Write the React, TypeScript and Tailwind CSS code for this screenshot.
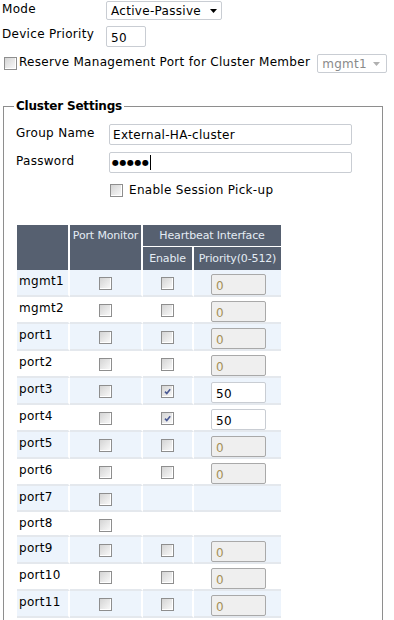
import React from 'react';

type Row = { name: string; hb: boolean; on?: boolean; val?: string; h?: string };

const rows: Row[] = [
  { name: 'mgmt1', hb: true, val: '0' },
  { name: 'mgmt2', hb: true, val: '0' },
  { name: 'port1', hb: true, val: '0' },
  { name: 'port2', hb: true, val: '0' },
  { name: 'port3', hb: true, on: true, val: '50' },
  { name: 'port4', hb: true, on: true, val: '50' },
  { name: 'port5', hb: true, val: '0' },
  { name: 'port6', hb: true, val: '0' },
  { name: 'port7', hb: false, h: 'h-[24px]' },
  { name: 'port8', hb: false, h: 'h-[23px]' },
  { name: 'port9', hb: true, val: '0' },
  { name: 'port10', hb: true, val: '0' },
  { name: 'port11', hb: true, val: '0' },
];

function Box({ checked }: { checked?: boolean }) {
  return (
    <span className="relative inline-block w-[13px] h-[13px] border border-[#8e8e8e] bg-linear-to-br from-[#d4d4d4] to-[#fbfbfb] shadow-[inset_-1px_-1px_0_#ffffff] align-top">
      {checked && (
        <svg viewBox="0 0 11 11" className="absolute left-0 top-0 w-[11px] h-[11px]">
          <path d="M3 5.6 L4.8 7.6 L8.2 3.2" fill="none" stroke="#4b5a94" strokeWidth="1.6" />
        </svg>
      )}
    </span>
  );
}

function Arrow({ color }: { color: string }) {
  return (
    <svg viewBox="0 0 7 4" className="w-[7px] h-[4px]">
      <path d="M0 0 H7 L3.5 4 Z" fill={color} />
    </svg>
  );
}

export default function App() {
  return (
    <div className="w-[394px] h-[620px] overflow-hidden bg-white text-black text-[12px] leading-[14px] tracking-[0.3px] font-['DejaVu_Sans',Verdana,sans-serif]">
      {/* top settings */}
      <div className="flex pt-[1px]">
        <div className="w-[106px] pl-[2px] mt-[1px]">Mode</div>
        <div className="w-[116px] h-[19px] border border-[#c9cdd3] rounded-[2px] flex items-center justify-between pl-[4px] pr-[4px]">
          <span>Active-Passive</span>
          <Arrow color="#000" />
        </div>
      </div>
      <div className="flex mt-[6px]">
        <div className="w-[106px] pl-[2px] mt-[1px]">Device Priority</div>
        <div className="w-[40px] h-[21px] border border-[#c9cdd3] rounded-[2px] flex items-center pl-[4px] pt-[2px]">50</div>
      </div>
      <div className="flex items-start mt-[7px]">
        <div className="ml-[4px] mt-[3px]"><Box /></div>
        <div className="ml-[2px] mt-[1px]">Reserve Management Port for Cluster Member</div>
        <div className="ml-[7px] w-[70px] h-[19px] border border-[#c9cdd3] rounded-[2px] flex items-center justify-between pl-[4px] pr-[6px] text-[#8a8a8a]">
          <span>mgmt1</span>
          <Arrow color="#b0b0b0" />
        </div>
      </div>

      {/* cluster settings */}
      <fieldset className="ml-[3px] mt-[26px] w-[380px] border border-[#8e8e8e] h-[700px]">
        <legend className="ml-[10px] px-[2px] font-bold tracking-[-0.2px]">Cluster Settings</legend>
        <div className="pt-[11px] pl-[12px]">
          <div className="flex">
            <div className="w-[93px] mt-[2px]">Group Name</div>
            <div className="w-[243px] h-[21px] border border-[#c9cdd3] rounded-[2px] flex items-center pl-[3px] pt-[1px]">External-HA-cluster</div>
          </div>
          <div className="flex mt-[7px]">
            <div className="w-[93px] mt-[2px]">Password</div>
            <div className="w-[243px] h-[21px] border border-[#c9cdd3] rounded-[2px] flex items-center pl-[2px]">
              <span className="text-[8px] tracking-[0.5px] font-bold">●●●●●</span>
              <span className="w-px h-[15px] bg-black ml-[1px]" />
            </div>
          </div>
          <div className="flex items-start mt-[10px] ml-[94px]">
            <div className="mt-[1px]"><Box /></div>
            <div className="ml-[6px]">Enable Session Pick-up</div>
          </div>
        </div>

        <table className="table-fixed border-separate border-spacing-0 w-[264px] ml-[13px] mt-[27px]">
          <colgroup>
            <col className="w-[53px]" />
            <col className="w-[73px]" />
            <col className="w-[51px]" />
            <col className="w-[87px]" />
          </colgroup>
          <thead className="text-[11px] tracking-[-0.15px] font-normal text-[#e4ecf4]">
            <tr>
              <th rowSpan={2} className="bg-[#566070] border-r-2 border-white" />
              <th rowSpan={2} className="bg-[#566070] border-r-2 border-white align-top pt-[4px] font-normal">Port Monitor</th>
              <th colSpan={2} className="bg-[#566070] h-[22px] border-b border-white font-normal">Heartbeat Interface</th>
            </tr>
            <tr>
              <th className="bg-[#566070] h-[23px] border-r-2 border-white font-normal">Enable</th>
              <th className="bg-[#566070] h-[23px] font-normal">Priority(0-512)</th>
            </tr>
          </thead>
          <tbody>
            {rows.map((r, i) => {
              const bg = i % 2 === 0 ? 'bg-[#edf4fc]' : 'bg-white';
              const h = r.h ?? 'h-[25px]';
              return (
                <tr key={r.name} className={bg}>
                  <td className="border-r-2 border-b-2 border-r-white border-b-[#e4e8ed] align-top p-0">
                    <div className={`${h} pl-[2px] pt-[4px]`}>{r.name}</div>
                  </td>
                  <td className="border-r-2 border-b-2 border-r-white border-b-[#e4e8ed] align-top p-0">
                    <div className={`${h} flex justify-center pt-[7px]`}><Box /></div>
                  </td>
                  <td className="border-r-2 border-b-2 border-r-white border-b-[#e4e8ed] align-top p-0">
                    <div className={`${h} flex justify-center pt-[7px]`}>{r.hb && <Box checked={r.on} />}</div>
                  </td>
                  <td className="border-b-2 border-b-[#e4e8ed] align-top p-0">
                    <div className={`${h} pt-[4px] pl-[17px]`}>
                      {r.hb && (r.on ? (
                        <div className="w-[55px] h-[21px] border border-[#c9cdd3] rounded-[2px] bg-white flex items-center pl-[4px] pt-[2px]">{r.val}</div>
                      ) : (
                        <div className="w-[55px] h-[21px] border border-[#a9a9a9] rounded-[2px] bg-[#efefef] flex items-center pl-[4px] pt-[2px] text-[#a58f58]">{r.val}</div>
                      ))}
                    </div>
                  </td>
                </tr>
              );
            })}
          </tbody>
        </table>
      </fieldset>
    </div>
  );
}
